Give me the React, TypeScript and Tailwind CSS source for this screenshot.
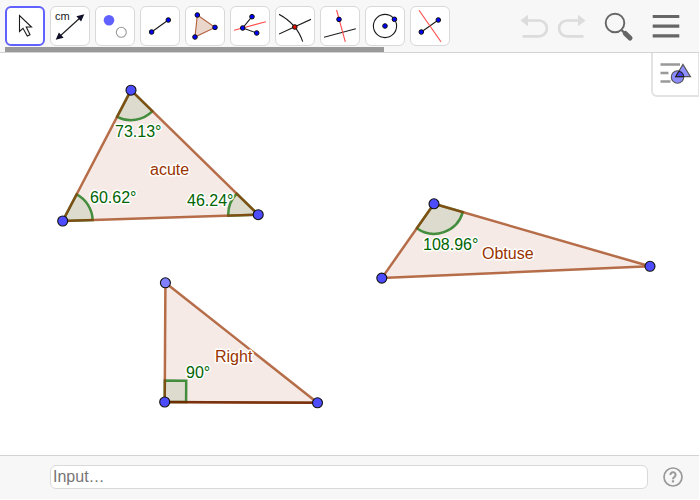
import type { ReactNode } from "react";

type Point = [number, number];

const INK = "#1a1a1a";

function Dot({ x, y, fill = "#0000ff" }: { x: number; y: number; fill?: string }) {
  return <circle cx={x} cy={y} r={2.3} fill={fill} stroke="#101010" strokeWidth={1} />;
}

function Icon({ children }: { children: ReactNode }) {
  return (
    <svg className="h-8 w-8 shrink-0" viewBox="0 0 32 32" fill="none" stroke={INK} strokeWidth={1.1} aria-hidden="true">
      {children}
    </svg>
  );
}

const tools: { name: string; icon: ReactNode }[] = [
  {
    name: "Move",
    icon: <path d="M10.5 5.5V21.5L14 18.3L18.3 26L21 24.7L17.3 17H22.5Z" fill="#fff" />,
  },
  {
    name: "Distance or Length",
    icon: (
      <>
        <path d="M5 27L27 7" />
        <path d="M1.7 29.7L4.9 22.4L9.6 27.7ZM30.3 4.3L22.4 6.3L27.1 11.6Z" fill="#101028" stroke="none" />
        <text x="1" y="9.5" fontSize="11" fill={INK} stroke="none">cm</text>
      </>
    ),
  },
  {
    name: "Point",
    icon: (
      <>
        <circle cx="10" cy="10.3" r="5.3" fill="#6161ff" stroke="none" />
        <circle cx="22.3" cy="22.3" r="5" fill="#fff" stroke="#999" />
      </>
    ),
  },
  {
    name: "Segment",
    icon: (
      <>
        <path d="M7.6 22L24.3 10" />
        <Dot x={7.6} y={22} />
        <Dot x={24.3} y={10} />
      </>
    ),
  },
  {
    name: "Polygon",
    icon: (
      <>
        <path d="M8.3 5L26 17.4L6 27Z" fill="#ebd6cc" stroke="#b0603c" />
        <Dot x={8.3} y={5} />
        <Dot x={26} y={17.4} />
        <Dot x={6} y={27} />
      </>
    ),
  },
  {
    name: "Angle Bisector",
    icon: (
      <>
        <path d="M18 6.7L8.7 18L22.7 23" />
        <path d="M0 20.3L32 11.7" stroke="#ff4b4b" />
        <Dot x={18} y={6.7} />
        <Dot x={8.7} y={18} />
        <Dot x={22.7} y={23} />
      </>
    ),
  },
  {
    name: "Intersect",
    icon: (
      <>
        <path d="M0 4.3Q18 14 23.7 31.7M0 24L32 9.3" />
        <Dot x={15.8} y={17} fill="#dd1100" />
      </>
    ),
  },
  {
    name: "Perpendicular Line",
    icon: (
      <>
        <path d="M0 27.3L31.8 18.7" />
        <path d="M12.6 0L21.3 31.8" stroke="#ff4b4b" />
        <Dot x={15} y={9.4} />
      </>
    ),
  },
  {
    name: "Circle with Center",
    icon: (
      <>
        <circle cx="16" cy="16" r="11.6" />
        <Dot x={16} y={16} />
        <Dot x={25.4} y={9.3} />
      </>
    ),
  },
  {
    name: "Reflect about Line",
    icon: (
      <>
        <path d="M7.3 22L24.3 10" />
        <path d="M5 0.3L27 31.7" stroke="#ff4b4b" />
        <Dot x={7.3} y={22} />
        <Dot x={24.3} y={10} />
      </>
    ),
  },
];

function Toolbar() {
  return (
    <header className="flex shrink-0 justify-between border-b border-[#d3d3d3] bg-[#f7f7f7] pl-[5px]">
      <nav aria-label="Tools" className="flex flex-col gap-px pt-1.5">
        <div className="flex gap-[5px]">
          {tools.map((tool, i) => (
            <button
              key={tool.name}
              type="button"
              aria-label={tool.name}
              className={`flex size-10 items-center justify-center rounded-md bg-white ${
                i === 0 ? "border-2 border-[#6161ff]" : "border border-[#d9d9d9]"
              }`}
            >
              <Icon>{tool.icon}</Icon>
            </button>
          ))}
        </div>
        <div className="h-[5px] w-[379px] bg-[#999]" />
      </nav>
      <div className="flex items-center gap-2 pr-[19px]">
        <button type="button" aria-label="Undo">
          <svg width="29" height="28" viewBox="0 0 29 28" fill="none" aria-hidden="true">
            <path d="M7 8.5H19A7.9 7.9 0 0 1 19 24.3H2.5" stroke="#dcdcdc" strokeWidth="2.7" />
            <path d="M0.5 8.5L8 2.8V14.2Z" fill="#dcdcdc" />
          </svg>
        </button>
        <button type="button" aria-label="Redo">
          <svg width="29" height="28" viewBox="0 0 29 28" fill="none" aria-hidden="true">
            <path d="M22 8.5H10A7.9 7.9 0 0 0 10 24.3H26.5" stroke="#dcdcdc" strokeWidth="2.7" />
            <path d="M28.5 8.5L21 2.8V14.2Z" fill="#dcdcdc" />
          </svg>
        </button>
        <button type="button" aria-label="Search" className="ml-2">
          <svg width="32" height="32" viewBox="0 0 32 32" fill="none" stroke="#666" aria-hidden="true">
            <circle cx="13" cy="13" r="9.3" strokeWidth="1.9" />
            <path d="M19.5 20L22.5 23" strokeWidth="2.4" />
            <path d="M23.3 23.5L28 28" strokeWidth="5" strokeLinecap="round" />
          </svg>
        </button>
        <button type="button" aria-label="Menu" className="ml-2.5">
          <svg width="28" height="28" viewBox="0 0 28 28" stroke="#666" strokeWidth="3.2" aria-hidden="true">
            <path d="M0.7 4.5H27.3M0.7 14.2H27.3M0.7 23.8H27.3" />
          </svg>
        </button>
      </div>
    </header>
  );
}

/** Sector (or square, for a right angle) at `v`, running from the ray to `a` to the ray to `b`. */
function Angle({ v, a, b, right = false }: { v: Point; a: Point; b: Point; right?: boolean }) {
  const r = right ? 21.4 : 30;
  const along = ([x, y]: Point): Point => {
    const dx = x - v[0];
    const dy = y - v[1];
    const len = Math.hypot(dx, dy);
    return [v[0] + (dx / len) * r, v[1] + (dy / len) * r];
  };
  const p = along(a);
  const q = along(b);
  const edge = right ? `L${p[0] + q[0] - v[0]} ${p[1] + q[1] - v[1]}L${q[0]} ${q[1]}` : `A${r} ${r} 0 0 0 ${q[0]} ${q[1]}`;
  return (
    <path
      d={`M${v[0]} ${v[1]}L${p[0]} ${p[1]}${edge}Z`}
      fill="#006400"
      fillOpacity={0.1}
      stroke="#007a10"
      strokeOpacity={0.76}
      strokeWidth={2.5}
    />
  );
}

function Triangle({ points }: { points: Point[] }) {
  return (
    <polygon
      points={points.map((p) => p.join(",")).join(" ")}
      fill="#993300"
      fillOpacity={0.1}
      stroke="#993300"
      strokeOpacity={0.7}
      strokeWidth={2.5}
      strokeLinejoin="round"
    />
  );
}

function Vertex({ at, light = false }: { at: Point; light?: boolean }) {
  return <circle cx={at[0]} cy={at[1]} r={5} fill={light ? "#8080ff" : "#4d4dff"} stroke="#111" strokeWidth={1.1} />;
}

function Label({ x, y, color, children }: { x: number; y: number; color: string; children: string }) {
  return (
    <text x={x} y={y} fill={color} stroke="#fff" strokeWidth={3} strokeLinejoin="round" paintOrder="stroke" fontSize={16}>
      {children}
    </text>
  );
}

const A: Point = [131, 37.2];
const B: Point = [62.7, 168];
const C: Point = [258.2, 161.7];
const D: Point = [165.4, 229.8];
const E: Point = [164.7, 349];
const F: Point = [317.5, 349.8];
const G: Point = [434, 150.8];
const H: Point = [381.8, 225.1];
const I: Point = [650, 213.3];

const GREEN = "#006400";
const BROWN = "#993300";

function GraphicsView() {
  return (
    <svg className="size-full" role="img" aria-label="Acute, right and obtuse triangles">
      <Angle v={A} a={B} b={C} />
      <Angle v={B} a={C} b={A} />
      <Angle v={C} a={A} b={B} />
      <Angle v={E} a={F} b={D} right />
      <Angle v={G} a={H} b={I} />
      <Triangle points={[A, B, C]} />
      <Triangle points={[D, E, F]} />
      <Triangle points={[G, H, I]} />
      <path d={`M${E.join(" ")}L${F.join(" ")}`} stroke="#6b2400" strokeOpacity={0.8} strokeWidth={2.5} />
      {[A, B, C, E, F, G, H, I].map((p) => (
        <Vertex key={p.join()} at={p} />
      ))}
      <Vertex at={D} light />
      <Label x={115} y={84} color={GREEN}>73.13°</Label>
      <Label x={90} y={150} color={GREEN}>60.62°</Label>
      <Label x={187} y={153} color={GREEN}>46.24°</Label>
      <Label x={186} y={325} color={GREEN}>90°</Label>
      <Label x={423} y={197} color={GREEN}>108.96°</Label>
      <Label x={150} y={122} color={BROWN}>acute</Label>
      <Label x={215} y={309} color={BROWN}>Right</Label>
      <Label x={482} y={206} color={BROWN}>Obtuse</Label>
    </svg>
  );
}

function StyleBarButton() {
  return (
    <button
      type="button"
      aria-label="Style bar"
      className="absolute top-0 right-0 flex h-11 w-12 items-center justify-center rounded-bl-md border-r border-b-2 border-l-2 border-[#e3e3e3] bg-white"
    >
      <svg width="32" height="24" viewBox="0 0 32 24" aria-hidden="true">
        <path d="M0.5 2.5H20M0.5 11H8.5M0.5 19.5H10.5" stroke="#999" strokeWidth="2.6" />
        <circle cx="17.5" cy="15" r="6.2" fill="#8c8cff" stroke="#555" strokeWidth="1.1" />
        <path d="M22.9 2.4L30.5 14.6H15.7Z" fill="#7d7dff" fillOpacity="0.85" stroke="#555" strokeWidth="1.1" />
        <path d="M18.9 9.2L15.7 14.6H23.7A6.2 6.2 0 0 0 18.9 9.2Z" fill="#4848ee" stroke="#222" strokeWidth="1.1" />
      </svg>
    </button>
  );
}

function InputBar() {
  return (
    <footer className="flex shrink-0 items-center gap-[15px] border-t border-[#d3d3d3] bg-[#f7f7f7] pt-[9px] pr-4 pb-2.5 pl-[50px]">
      <input
        type="text"
        aria-label="Input"
        placeholder="Input…"
        className="h-6 min-w-0 flex-1 rounded-md border border-[#d9d9d9] bg-white px-0.5 text-base leading-5 placeholder:text-[#757575]"
      />
      <button type="button" aria-label="Help">
        <svg width="20" height="20" viewBox="0 0 20 20" fill="none" stroke="#999" aria-hidden="true">
          <circle cx="10" cy="10" r="9" strokeWidth="1.7" />
          <path d="M7.4 8A2.6 2.6 0 1 1 11.5 9.9C10.4 10.6 10 10.9 10 12.2" strokeWidth="2" />
          <path d="M10 13.3V15.4" strokeWidth="2.2" />
        </svg>
      </button>
    </footer>
  );
}

export default function App() {
  return (
    <div className="flex h-screen flex-col bg-white pr-px pb-px font-['Liberation_Sans',Arial,sans-serif]">
      <Toolbar />
      <main className="relative min-h-0 flex-1 overflow-hidden">
        <GraphicsView />
        <StyleBarButton />
      </main>
      <InputBar />
    </div>
  );
}
